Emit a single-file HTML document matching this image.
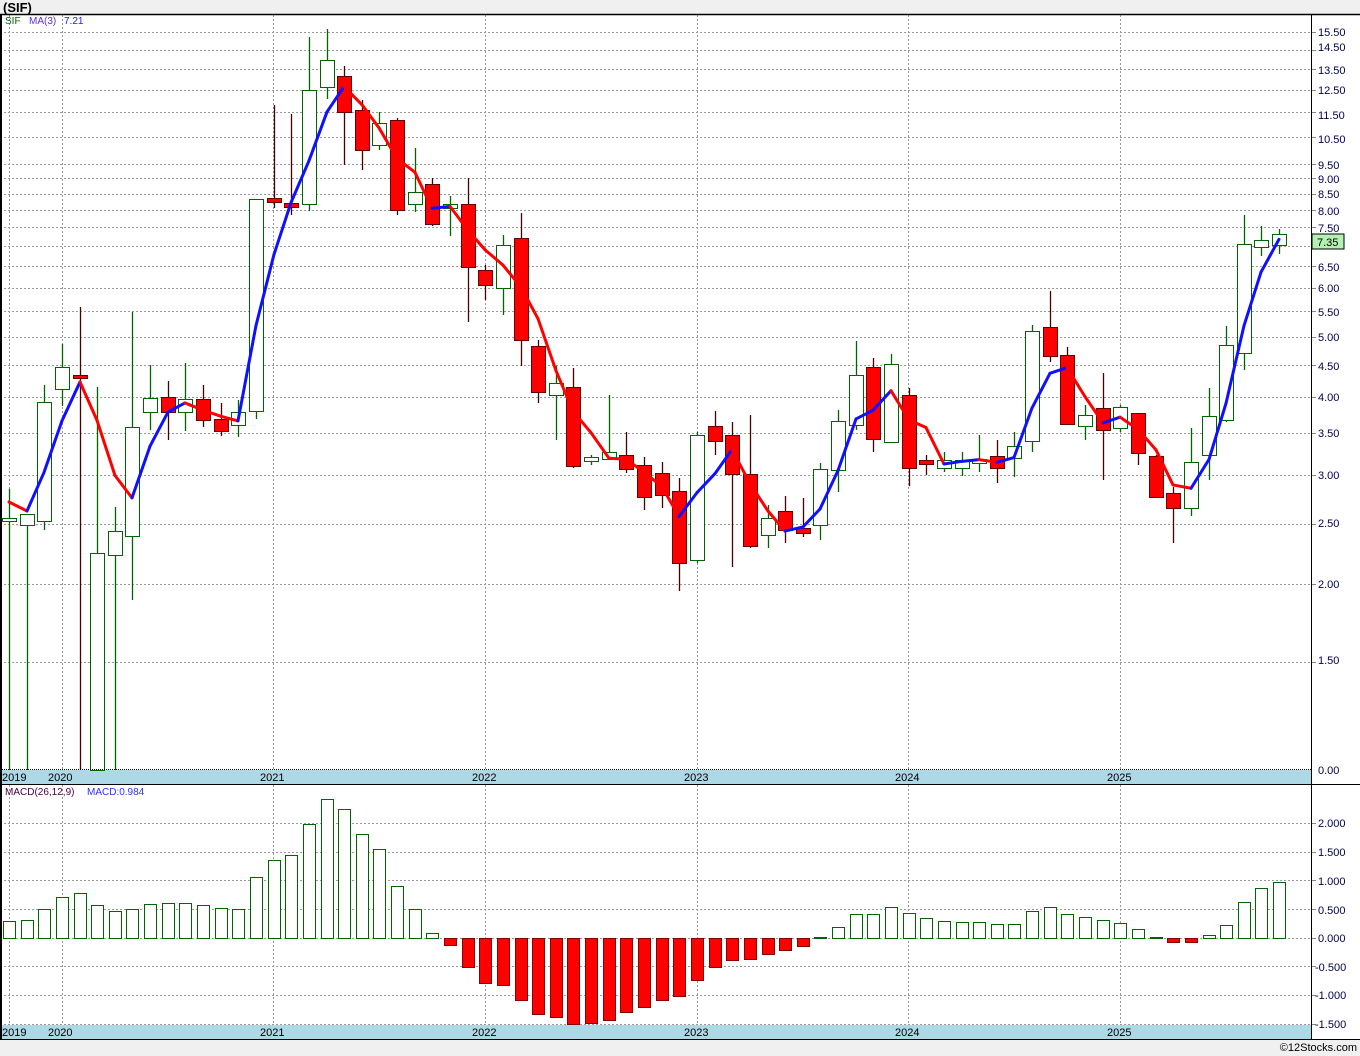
<!DOCTYPE html>
<html><head><meta charset="utf-8"><style>
html,body{margin:0;padding:0;background:#f0f0f0;}
svg{display:block;font-family:"Liberation Sans",sans-serif;}
</style></head><body>
<svg id="s" width="1360" height="1056" xmlns="http://www.w3.org/2000/svg">
<rect x="0" y="0" width="1360" height="1056" fill="#f0f0f0"/>
<text x="3" y="12" font-size="13" font-weight="bold" fill="#000">(SIF)</text>
<rect x="0" y="14" width="1360" height="1026" fill="#fff"/>
<g id="grid" stroke="#999" stroke-width="1" stroke-dasharray="2,2"></g>
<rect x="0" y="770" width="1311" height="14" fill="#add8e6"/>
<rect x="0" y="1025" width="1311" height="14" fill="#add8e6"/>
<g id="shapes"></g>
<line x1="0" y1="14.5" x2="1360" y2="14.5" stroke="#000" stroke-width="1.5"/>
<line x1="1" y1="14" x2="1" y2="1040" stroke="#000" stroke-width="2"/>
<line x1="1311.5" y1="14" x2="1311.5" y2="1040" stroke="#000"/>
<line x1="0" y1="784.5" x2="1360" y2="784.5" stroke="#000"/>
<line x1="0" y1="1039.5" x2="1360" y2="1039.5" stroke="#000"/>
<line x1="0" y1="769.5" x2="1311" y2="769.5" stroke="#000" stroke-dasharray="1,1"/>
<g font-size="11" fill="#000">
<text x="2" y="781">2019</text><text x="48" y="781">2020</text><text x="260" y="781">2021</text><text x="472" y="781">2022</text><text x="684" y="781">2023</text><text x="895" y="781">2024</text><text x="1107" y="781">2025</text>
<text x="2" y="1036">2019</text><text x="48" y="1036">2020</text><text x="260" y="1036">2021</text><text x="472" y="1036">2022</text><text x="684" y="1036">2023</text><text x="895" y="1036">2024</text><text x="1107" y="1036">2025</text>
</g>
<text x="5" y="24" font-size="10" fill="#006400">SIF</text>
<text x="29" y="24" font-size="10" fill="#5a2de0">MA(3)</text>
<text x="64" y="24" font-size="10" fill="#2020ff">7.21</text>
<text x="5" y="795" font-size="10" fill="#4b0040">MACD(26,12,9)</text>
<text x="87" y="795" font-size="10" fill="#3030ff">MACD:0.984</text>
<rect x="1312" y="234" width="32" height="15" fill="#b4f0b4" stroke="#000"/>
<text x="1317" y="246" font-size="11" fill="#000">7.35</text>
<text x="1357" y="1051" font-size="11" fill="#000" text-anchor="end">©12Stocks.com</text>
<g id="axtext" font-size="11" fill="#000050">
<text x="1318" y="36">15.50</text><text x="1318" y="51">14.50</text><text x="1318" y="74">13.50</text><text x="1318" y="94">12.50</text><text x="1318" y="119">11.50</text><text x="1318" y="143">10.50</text><text x="1318" y="169">9.50</text><text x="1318" y="183">9.00</text><text x="1318" y="198">8.50</text><text x="1318" y="215">8.00</text><text x="1318" y="232">7.50</text><text x="1318" y="271">6.50</text><text x="1318" y="292">6.00</text><text x="1318" y="316">5.50</text><text x="1318" y="341">5.00</text><text x="1318" y="370">4.50</text><text x="1318" y="401">4.00</text><text x="1318" y="437">3.50</text><text x="1318" y="479">3.00</text><text x="1318" y="527">2.50</text><text x="1318" y="588">2.00</text><text x="1318" y="664">1.50</text><text x="1318" y="774">0.00</text>
<text x="1318" y="827">2.000</text><text x="1318" y="856">1.500</text><text x="1318" y="885">1.000</text><text x="1318" y="914">0.500</text><text x="1318" y="942">0.000</text><text x="1315" y="971">-0.500</text><text x="1315" y="999">-1.000</text><text x="1315" y="1028">-1.500</text>
</g>
</svg>
<script>
var NS="http://www.w3.org/2000/svg";
function el(p,t,a){var e=document.createElementNS(NS,t);for(var k in a)e.setAttribute(k,a[k]);p.appendChild(e);return e;}
var g=document.getElementById('grid'),sh=document.getElementById('shapes');
var A=771,B=269.8;
function py(p){return A-B*Math.log(p);}
function pp(y){return Math.exp((A-y)/B);}
var lv=[15.5,14.5,13.5,12.5,11.5,10.5,9.5,9,8.5,8,7.5,7,6.5,6,5.5,5,4.5,4,3.5,3,2.5,2,1.5];
lv.forEach(function(v){var y=Math.round(py(v))+.5;el(g,'line',{x1:0,y1:y,x2:1311,y2:y});el(sh,'line',{x1:1311,y1:y,x2:1316,y2:y,stroke:'#888'});});
[823,852,880,909,938,966,995,1024].forEach(function(y){el(g,'line',{x1:0,y1:y+.5,x2:1311,y2:y+.5});el(sh,'line',{x1:1311,y1:y+.5,x2:1316,y2:y+.5,stroke:'#888'});});
[9,62,273,485,697,908,1120].forEach(function(x){el(g,'line',{x1:x+.5,y1:15,x2:x+.5,y2:770});el(g,'line',{x1:x+.5,y1:785,x2:x+.5,y2:1025});});
var C=[[1,518,521,489,770],[1,514,525,514,770],[1,402,521,385,530],[1,367,389,344,406],[0,375,378,307,770],[1,553,770,387,770],[1,531,555,507,770],[1,427,536,312,600],[1,398,412,365,430],[0,397,412,381,440],[1,399,412,363,431],[0,399,420,385,427],[0,419,431,403,436],[1,412,425,400,437],[1,199,411,199,419],[0,198,202,105,208],[0,203,207,114,215],[1,90,204,37,211],[1,60,87,29,99],
[0,76,112,66,165],[0,110,150,100,170],[1,123,145,112,150],[0,120,210,118,215],[1,192,204,148,212],[0,184,224,178,226],[1,204,208,196,236],[0,204,267,178,322],[0,270,285,265,300],[1,245,288,235,315],[0,238,340,213,366],[0,346,392,340,403],[1,383,395,366,440],[0,387,466,368,468],[1,457,461,455,465],[1,452,459,395,460],[0,455,469,432,473],[0,465,497,457,510],[0,473,495,462,508],[0,491,563,478,591],[1,435,560,432,563],[0,426,441,411,455],[0,435,474,422,567],[0,474,546,415,548],[1,518,535,505,548],[0,511,530,496,543],[0,528,533,498,537],[1,469,525,463,540],[1,421,470,410,492],[1,375,425,341,430],[0,367,439,358,452],[1,364,442,354,443],[0,395,468,388,486],[0,460,464,455,475],[1,460,468,452,472],[1,460,468,452,476],[1,459,463,435,472],[0,456,468,440,483],[1,446,458,432,477],[1,331,441,325,452],[0,327,356,291,362],[0,355,424,347,425],[1,415,426,405,440],[0,408,430,373,480],[1,407,428,405,432],[0,413,453,413,465],[0,456,497,455,497],[0,493,508,487,543],[1,462,508,428,516],[1,416,455,388,480],[1,345,420,326,422],[1,244,353,215,370],[1,240,247,226,256],[1,234,245,229,254]];
function X(i){return Math.round(9+17.64*i);}
var closes=[];
C.forEach(function(c,i){var x=X(i);
 closes.push(c[0]?c[1]:c[2]);
 el(sh,'line',{x1:x+.5,y1:c[3],x2:x+.5,y2:c[4],stroke:c[0]?'#006400':'#4a0000','stroke-width':1.3});
 var h=Math.max(c[2]-c[1],2);
 if(c[0])el(sh,'rect',{x:x-7+.5,y:c[1]+.5,width:14,height:h,fill:'#fff',stroke:'#006400'});
 else el(sh,'rect',{x:x-7+.5,y:c[1]+.5,width:14,height:h,fill:'#f00',stroke:'#600'});
});
var ma=[];
for(var i=0;i<C.length;i++){var a=[closes[Math.max(0,i-2)],closes[Math.max(0,i-1)],closes[i]];var m=(pp(a[0])+pp(a[1])+pp(a[2]))/3;ma.push(py(m));}
ma[0]=502;ma[1]=511;
for(var i=1;i<C.length;i++){el(sh,'line',{x1:X(i-1),y1:ma[i-1],x2:X(i),y2:ma[i],stroke:ma[i]<=ma[i-1]?'#1010ff':'#ff0000','stroke-width':3,'stroke-linecap':'round'});}
var M=[921,920,909,897,893,905,911,909,904,903,903,905,908,909,877,860,855,824,799,809,834,849,886,909,933,945,967,983,985,1000,1014,1017,1024,1023,1020,1012,1007,1000,996,980,967,960,959,954,950,946,937,927,914,914,907,913,918,921,922,922,924,924,911,907,914,917,920,923,929,937,942,942,935,925,902,888,882];
M.forEach(function(y,i){var x=X(i)-6;
 if(y<938)el(sh,'rect',{x:x+.5,y:y+.5,width:12,height:938-y,fill:'#fff',stroke:'#006400'});
 else el(sh,'rect',{x:x+.5,y:938.5,width:12,height:Math.max(y-938,2),fill:'#f00',stroke:'#800'});
});
</script>
</body></html>
